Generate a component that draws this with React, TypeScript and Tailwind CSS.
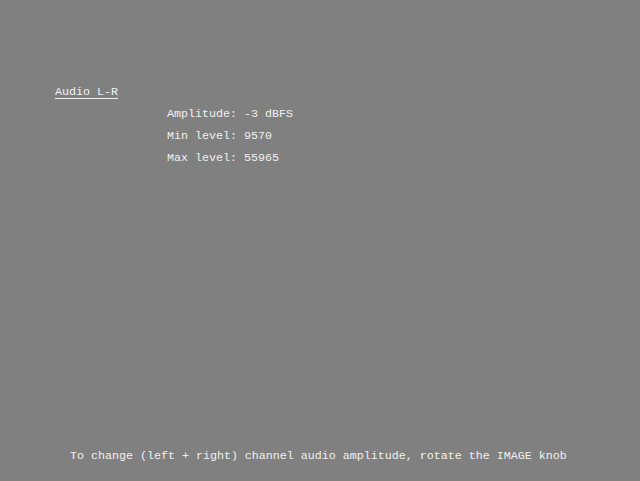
export default function App() {
  return (
    <div
      className="w-[640px] h-[481px] bg-[#808080] text-[#f0f0f0] flex flex-col text-[11.67px] leading-[22px]"
      style={{ fontFamily: '"Liberation Mono", "DejaVu Sans Mono", monospace' }}
    >
      <div className="pt-[81px] pl-[55px]">
        <span className="underline underline-offset-[3px]">Audio L-R</span>
      </div>
      <div className="pl-[167px] flex flex-col">
        <div>Amplitude: -3 dBFS</div>
        <div>Min level: 9570</div>
        <div>Max level: 55965</div>
      </div>
      <div className="mt-auto mb-[14px] pl-[70px] whitespace-pre">
        To change (left + right) channel audio amplitude, rotate the IMAGE knob
      </div>
    </div>
  );
}
